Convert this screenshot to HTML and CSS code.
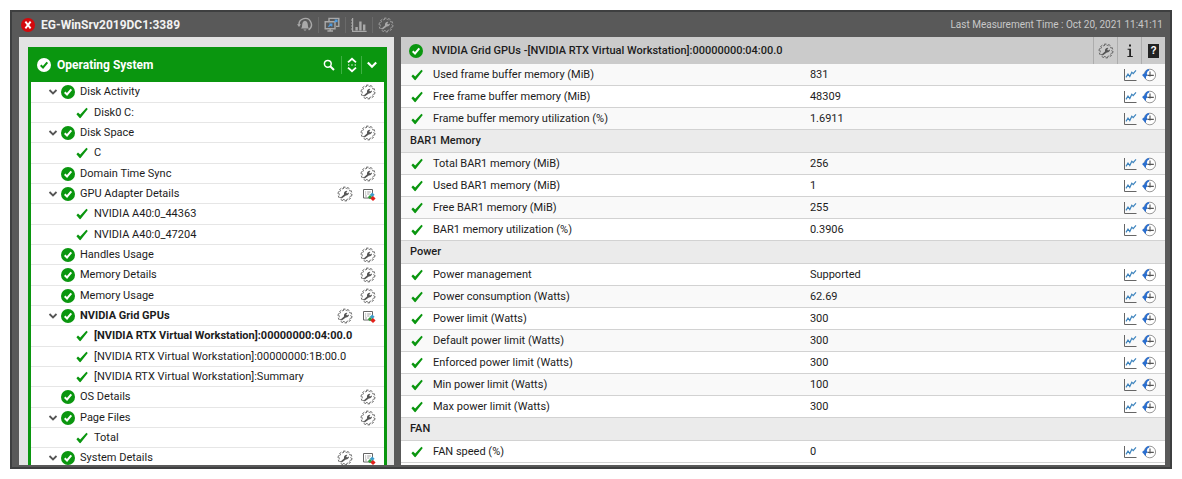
FILE: index.html
```html
<!DOCTYPE html>
<html lang="en">
<head>
    <meta charset="UTF-8">
    <meta name="viewport" content="width=device-width, initial-scale=1.0">
    <title>EG-WinSrv2019DC1:3389</title>
    <link rel="stylesheet" href="styles.css">
</head>
<body>
    <!-- Shared icons -->
    <svg class="sprite" aria-hidden="true">
        <symbol id="ok" viewBox="0 0 14 14">
            <circle cx="7" cy="7" r="7" fill="currentColor" stroke="none"/>
            <path d="M3.7 7.3 L6 9.5 L10.3 4.4" fill="none" stroke-width="2"/>
        </symbol>
        <symbol id="tick" viewBox="0 0 12 12">
            <path d="M0.4 7.2 L2 5.6 L4.2 7.6 L10.4 0.8 L11.8 2 L4.6 11 Q3.8 11.4 3.2 10.6 Z" fill="#0a960f"/>
        </symbol>
        <symbol id="gear" viewBox="0 0 16 16">
            <circle cx="8" cy="8" r="6.9" fill="none" stroke="currentColor" stroke-width="1" stroke-dasharray="2.4 1.935"/>
            <circle cx="8" cy="8" r="5.8" fill="none" stroke="currentColor" stroke-width="0.9" stroke-dasharray="1.9 1.744" stroke-dashoffset="1.8"/>
            <path d="M3.6 11.4 L7 8.4 Q6.6 5.6 9.4 4.8 L10.4 4.9 L9.2 6.4 L10 7.4 L12 6.6 Q12 9.4 8.8 9.4 L5 12.2 Z" fill="currentColor"/>
        </symbol>
        <symbol id="down" viewBox="0 0 10 10">
            <path d="M1.5 3 L5 6.5 L8.5 3" fill="none" stroke="currentColor" stroke-width="1.8"/>
        </symbol>
        <symbol id="report" viewBox="0 0 14 14">
            <path d="M1.5 2.5 H10.5 V11 H1.5 Z" fill="#fff" stroke="#666" stroke-width="1"/>
            <path d="M3 5 H4.2 M5.2 5 H8.8 M3 7 H4.2 M5.2 7 H7.4 M3 9 H5" stroke="#888" stroke-width="0.8"/>
            <path d="M10.2 5.4 L12.6 7.8 L10.2 10.2 L7.8 7.8 Z" fill="#3d9dcb"/>
            <path d="M8 8 L10.2 10.2 L8 12.2 L5.8 10.2 Z" fill="#2f9c35"/>
            <path d="M11 9 L13.6 11.5 L11 14 L8.4 11.5 Z" fill="#e3201b"/>
        </symbol>
        <symbol id="chart" viewBox="0 0 14 14">
            <path d="M1.5 1 V12.5 H13.5" fill="none" stroke="#666" stroke-width="1"/>
            <path d="M3 9.4 L5 6 L6.8 8.6 L8.8 4.2 L10.2 5.6 L13 2.4" fill="none" stroke="#3c83bd" stroke-width="1.2"/>
        </symbol>
        <symbol id="history" viewBox="0 0 14 14">
            <circle cx="7.8" cy="7" r="5.8" fill="#fff" stroke="#8c8c8c" stroke-width="0.9"/>
            <path d="M8 3.4 V8.6 M5.4 7.4 H11.8" fill="none" stroke="#555" stroke-width="1.1"/>
            <path d="M7 0.9 Q3.4 1.4 2.8 5 L0 7 L4 11.2 V8.6 L5.6 7.6 L4.8 5.6 Q5 3 7.4 2.2 Z" fill="#2a6fd0"/>
        </symbol>
        <symbol id="bell" viewBox="0 0 16 16">
            <path d="M2 8 A6.2 6.2 0 1 1 11.6 12.8" fill="none" stroke="currentColor" stroke-width="1.4"/>
            <path d="M0 7.2 H4 L2 10 Z" fill="currentColor"/>
            <path d="M4 11.6 Q5.2 10.6 5.2 7.4 Q5.6 4.2 8 3.8 Q10.4 4.2 10.8 7.4 Q10.8 10.6 12 11.6 Z M6.4 12.4 H9.6 Q8 14.8 6.4 12.4" fill="currentColor"/>
        </symbol>
        <symbol id="screens" viewBox="0 0 16 16">
            <path d="M5 4.4 V1.4 H14.8 V9.4 H12" fill="none" stroke="currentColor" stroke-width="1.4"/>
            <path d="M1.2 4.8 H11 V11.8 H1.2 Z M3.4 14 H9 M6.2 12 V14" fill="none" stroke="currentColor" stroke-width="1.4"/>
            <path d="M4.4 9.8 L7.6 7 M5.2 7 H7.8 V9.4 M10 5.4 L12.8 3.2 M10.6 3 H13 V5.2" fill="none" stroke="#4f9be0" stroke-width="1.2"/>
        </symbol>
        <symbol id="bars" viewBox="0 0 16 16">
            <path d="M1.6 1 V14.4 H15.6" fill="none" stroke="currentColor" stroke-width="1.2"/>
            <path d="M0 3 H1.6 M0 6 H1.6 M0 9 H1.6 M0 12 H1.6" stroke="currentColor" stroke-width="1"/>
            <path d="M4.4 10 H6.8 V13.6 H4.4 Z M8.2 4.6 H10.6 V13.6 H8.2 Z M12 7.6 H14.4 V13.6 H12 Z" fill="currentColor"/>
        </symbol>
        <symbol id="search" viewBox="0 0 12 12">
            <circle cx="4.8" cy="4.8" r="3.4" fill="none" stroke="currentColor" stroke-width="1.5"/>
            <path d="M7.2 7.2 L11 11" stroke="currentColor" stroke-width="2"/>
        </symbol>
        <symbol id="updown" viewBox="0 0 10 16">
            <path d="M1 5.4 L5 1.8 L9 5.4 M1 10.6 L5 14.2 L9 10.6" fill="none" stroke="currentColor" stroke-width="1.8"/>
            <path d="M1 8 H2.4 M4.3 8 H5.7 M7.6 8 H9" stroke="currentColor" stroke-width="1"/>
        </symbol>
        <symbol id="error" viewBox="0 0 14 14">
            <circle cx="7" cy="7" r="7" fill="#d4090d"/>
            <path d="M4.4 3.6 L9.6 10.4 M9.6 3.6 L4.4 10.4" stroke="#fff" stroke-width="1.9"/>
        </symbol>
        <symbol id="info" viewBox="0 0 8 14">
            <path d="M3 0.6 H5 V2.6 H3 Z M1.6 4.8 H5 V12 H6.8 V13 H1.4 V12 H3.2 V5.8 H1.6 Z" fill="#222"/>
        </symbol>
    </svg>

    <div class="frame">
        <header class="topbar">
            <svg class="icon-14"><use href="#error"/></svg>
            <h1>EG-WinSrv2019DC1:3389</h1>
            <nav class="tools">
                <button type="button" aria-label="Alarms"><svg class="icon-16"><use href="#bell"/></svg></button>
                <button type="button" aria-label="Remote control"><svg class="icon-16"><use href="#screens"/></svg></button>
                <button type="button" aria-label="Graphs"><svg class="icon-16"><use href="#bars"/></svg></button>
                <button type="button" aria-label="Settings"><svg class="icon-16"><use href="#gear"/></svg></button>
            </nav>
            <span class="measured">Last Measurement Time : Oct 20, 2021 11:41:11</span>
        </header>

        <main class="panels">
            <aside class="layers">
                <div class="layer">
                    <div class="layer-head">
                        <svg class="icon-14 ok-light"><use href="#ok"/></svg>
                        <h2>Operating System</h2>
                        <button type="button" aria-label="Search"><svg class="icon-12"><use href="#search"/></svg></button>
                        <button type="button" aria-label="Expand all"><svg class="icon-tall"><use href="#updown"/></svg></button>
                        <button type="button" aria-label="Collapse"><svg class="icon-12"><use href="#down"/></svg></button>
                    </div>
                    <ul class="tree" id="tree"></ul>
                </div>
            </aside>

            <section class="measures">
                <div class="measures-head">
                    <svg class="icon-14 ok"><use href="#ok"/></svg>
                    <h2>NVIDIA Grid GPUs -[NVIDIA RTX Virtual Workstation]:00000000:04:00.0</h2>
                    <button type="button" aria-label="Configure"><svg class="icon-16"><use href="#gear"/></svg></button>
                    <button type="button" aria-label="Information"><svg class="icon-info"><use href="#info"/></svg></button>
                    <button type="button" aria-label="Help"><span class="help">?</span></button>
                </div>
                <table>
                    <colgroup>
                        <col class="col-name">
                        <col>
                        <col class="col-actions">
                    </colgroup>
                    <tbody id="measures"></tbody>
                </table>
            </section>
        </main>
    </div>

    <script>
        // level 0 = test, level 1 = descriptor
        const tests = [
            { name: "Disk Activity", open: true, gear: true },
            { name: "Disk0 C:", level: 1 },
            { name: "Disk Space", open: true, gear: true },
            { name: "C", level: 1 },
            { name: "Domain Time Sync", gear: true },
            { name: "GPU Adapter Details", open: true, gear: true, report: true },
            { name: "NVIDIA A40:0_44363", level: 1 },
            { name: "NVIDIA A40:0_47204", level: 1 },
            { name: "Handles Usage", gear: true },
            { name: "Memory Details", gear: true },
            { name: "Memory Usage", gear: true },
            { name: "NVIDIA Grid GPUs", open: true, gear: true, report: true, selected: true },
            { name: "[NVIDIA RTX Virtual Workstation]:00000000:04:00.0", level: 1, selected: true },
            { name: "[NVIDIA RTX Virtual Workstation]:00000000:1B:00.0", level: 1 },
            { name: "[NVIDIA RTX Virtual Workstation]:Summary", level: 1 },
            { name: "OS Details", gear: true },
            { name: "Page Files", open: true, gear: true },
            { name: "Total", level: 1 },
            { name: "System Details", open: true, gear: true, report: true }
        ];

        // rows with one entry are section headings
        const measures = [
            ["Used frame buffer memory (MiB)", "831"],
            ["Free frame buffer memory (MiB)", "48309"],
            ["Frame buffer memory utilization (%)", "1.6911"],
            ["BAR1 Memory"],
            ["Total BAR1 memory (MiB)", "256"],
            ["Used BAR1 memory (MiB)", "1"],
            ["Free BAR1 memory (MiB)", "255"],
            ["BAR1 memory utilization (%)", "0.3906"],
            ["Power"],
            ["Power management", "Supported"],
            ["Power consumption (Watts)", "62.69"],
            ["Power limit (Watts)", "300"],
            ["Default power limit (Watts)", "300"],
            ["Enforced power limit (Watts)", "300"],
            ["Min power limit (Watts)", "100"],
            ["Max power limit (Watts)", "300"],
            ["FAN"],
            ["FAN speed (%)", "0"]
        ];

        function icon(id, cls) {
            return `<svg class="${cls}"><use href="#${id}"/></svg>`;
        }

        function button(label, id, cls) {
            return `<button type="button" aria-label="${label}">${icon(id, cls)}</button>`;
        }

        document.getElementById("tree").innerHTML = tests.map(t => {
            const cls = (t.level ? "descriptor" : "test") + (t.selected ? " selected" : "");
            const lead = t.level
                ? icon("tick", "icon-12")
                : `<span class="arrow">${t.open ? button("Collapse " + t.name, "down", "icon-10") : ""}</span>` + icon("ok", "icon-14 ok");
            return `<li class="${cls}">${lead}<a href="#">${t.name}</a>` +
                (t.gear ? button("Configure " + t.name, "gear", "icon-16") : "") +
                (t.report ? button("Report " + t.name, "report", "icon-14") : "") + "</li>";
        }).join("");

        document.getElementById("measures").innerHTML = measures.map(([name, value]) => {
            if (value === undefined) {
                return `<tr class="group"><th colspan="3" scope="colgroup">${name}</th></tr>`;
            }
            return `<tr><td><div class="name">${icon("tick", "icon-12")}<span>${name}</span></div></td><td>${value}</td>` +
                `<td><div class="actions">${button("Graph of " + name, "chart", "icon-14")}${button("History of " + name, "history", "icon-14")}</div></td></tr>`;
        }).join("");
    </script>
</body>
</html>
```
FILE: styles.css
```css
* {
    box-sizing: border-box;
}
body {
    margin: 0;
    padding: 10px;
    height: 100vh;
    background-color: #fff;
    color: #1c1c1c;
    font-family: Roboto, "Liberation Sans", sans-serif;
    font-size: 11px;
    line-height: 16px;
}
h1, h2 {
    margin: 0;
    font-size: 12px;
    font-weight: bold;
}
a {
    color: inherit;
    text-decoration: none;
}
button {
    display: flex;
    align-items: center;
    justify-content: center;
    padding: 0;
    border: 0;
    background: none;
    color: inherit;
    cursor: pointer;
}
svg {
    display: block;
    flex: none;
}
.sprite {
    position: absolute;
    width: 0;
    height: 0;
}
.icon-10 {
    width: 10px;
    height: 10px;
}
.icon-12 {
    width: 12px;
    height: 12px;
}
.icon-14 {
    width: 14px;
    height: 14px;
}
.icon-16 {
    width: 16px;
    height: 16px;
}
.icon-tall {
    width: 10px;
    height: 16px;
}
.icon-info {
    width: 8px;
    height: 14px;
}
.ok {
    color: #0a960f;
    stroke: #fff;
}
.ok-light {
    color: #fff;
    stroke: #0a960f;
}

/* Window */
.frame {
    display: flex;
    flex-direction: column;
    height: 100%;
    border: 2px solid #3e3f40;
    padding: 0 5px 2px 7px;
    background-color: #595959;
}
.topbar {
    display: flex;
    align-items: center;
    flex: none;
    height: 25px;
    padding: 0 2px;
    color: #f2f2f2;
}
.topbar h1 {
    width: 250px;
    margin-left: 6px;
}
.tools {
    display: flex;
    color: #a9a9a9;
}
.tools button {
    width: 27px;
    height: 16px;
    border-left: 1px solid #6a6a6a;
}
.tools button:first-child {
    border-left: 0;
}
.measured {
    margin-left: auto;
    color: #c8c8c8;
    font-size: 10px;
}
.panels {
    display: flex;
    flex: 1;
    gap: 7px;
    min-height: 0;
}

/* Layer tree */
.layers {
    flex: none;
    width: 375px;
    padding: 10px 7px 0 9px;
    overflow: hidden;
    background-color: #e3e3e3;
}
.layer {
    border: 3px solid #0a960f;
    border-top: 0;
}
.layer-head {
    display: flex;
    align-items: center;
    height: 35px;
    padding: 0 3px 0 6px;
    background-color: #0a960f;
    color: #fff;
}
.layer-head h2 {
    flex: 1;
    margin-left: 6px;
}
.layer-head button {
    width: 24px;
    height: 18px;
}
.layer-head button + button {
    width: 20px;
    border-left: 1px solid #3fb044;
}
.tree {
    margin: 0;
    padding: 0;
    list-style-type: none;
    background-color: #fff;
}
.tree li {
    display: flex;
    align-items: center;
    height: 20px;
    padding-right: 8px;
    border-bottom: 1px solid #e6e6e6;
    color: #1c1c1c;
}
.tree li:nth-child(3n + 1) {
    height: 21px;
}
.tree a {
    flex: 1;
    margin-left: 5px;
}
.tree button {
    color: #555;
}
.tree li > button + button {
    margin-left: 9px;
}
.arrow {
    width: 13px;
    margin-left: 17px;
}
.descriptor .icon-12 {
    margin-left: 45px;
}
.descriptor a {
    margin-left: 6px;
}
.selected {
    font-weight: bold;
}

/* Measures */
.measures {
    flex: 1;
    min-width: 0;
    overflow: hidden;
    background-color: #fff;
}
.measures-head {
    display: flex;
    align-items: center;
    height: 27px;
    padding-left: 8px;
    background-color: #cbcbcb;
}
.measures-head h2 {
    flex: 1;
    margin-left: 9px;
    font-size: 11px;
    font-weight: 500;
}
.measures-head button {
    width: 24px;
    height: 27px;
    border-left: 1px solid #adadad;
    color: #555;
}
.help {
    width: 11px;
    height: 14px;
    background-color: #222;
    color: #fff;
    font-size: 10px;
    font-weight: bold;
    line-height: 14px;
}
table {
    width: 100%;
    table-layout: fixed;
    border-collapse: separate;
    border-spacing: 0;
}
.col-name {
    width: 53%;
}
.col-actions {
    width: 46px;
}
td, th {
    height: 22px;
    padding: 0 4px;
    border-bottom: 1px solid #d2d2d2;
    background-color: #fff;
}
tr:nth-child(odd) td {
    background-color: #f9f9f9;
}
th {
    height: 23px;
    padding-left: 9px;
    background-color: #ebebeb;
    font-weight: 500;
    text-align: left;
}
.name {
    display: flex;
    align-items: center;
    gap: 10px;
    padding-left: 6px;
}
.actions {
    display: flex;
    gap: 5px;
}
```
